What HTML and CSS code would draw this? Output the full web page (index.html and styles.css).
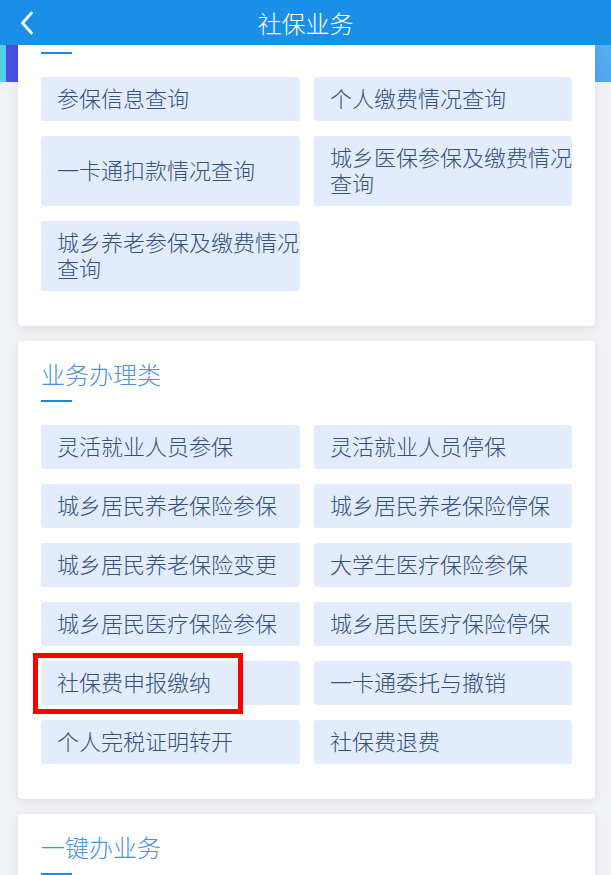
FILE: index.html
```html
<!DOCTYPE html>
<html lang="zh-CN">
<head>
  <meta charset="UTF-8">
  <title>社保业务</title>
  <link rel="stylesheet" href="styles.css">
</head>
<body>

<header class="sb-header">
  <a class="sb-back" href="#">
    <svg width="14" height="24" viewBox="0 0 14 24">
      <path d="M11.5 2 L2.5 12 L11.5 22" fill="none" stroke="#fff" stroke-width="2.8" stroke-linecap="round" stroke-linejoin="round"/>
    </svg>
  </a>
  <h1>社保业务</h1>
</header>

<main class="sb-page">

  <section class="sb-card">
    <h2>信息查询类</h2>
    <div class="sb-line"></div>
    <div class="sb-grid">
      <a class="sb-btn" href="#">参保信息查询</a>
      <a class="sb-btn" href="#">个人缴费情况查询</a>
      <a class="sb-btn" href="#">一卡通扣款情况查询</a>
      <a class="sb-btn" href="#">城乡医保参保及缴费情况查询</a>
      <a class="sb-btn" href="#">城乡养老参保及缴费情况查询</a>
    </div>
  </section>

  <section class="sb-card">
    <h2>业务办理类</h2>
    <div class="sb-line"></div>
    <div class="sb-grid">
      <a class="sb-btn" href="#">灵活就业人员参保</a>
      <a class="sb-btn" href="#">灵活就业人员停保</a>
      <a class="sb-btn" href="#">城乡居民养老保险参保</a>
      <a class="sb-btn" href="#">城乡居民养老保险停保</a>
      <a class="sb-btn" href="#">城乡居民养老保险变更</a>
      <a class="sb-btn" href="#">大学生医疗保险参保</a>
      <a class="sb-btn" href="#">城乡居民医疗保险参保</a>
      <a class="sb-btn" href="#">城乡居民医疗保险停保</a>
      <a class="sb-btn sb-mark" href="#">社保费申报缴纳</a>
      <a class="sb-btn" href="#">一卡通委托与撤销</a>
      <a class="sb-btn" href="#">个人完税证明转开</a>
      <a class="sb-btn" href="#">社保费退费</a>
    </div>
  </section>

  <section class="sb-card">
    <h2>一键办业务</h2>
    <div class="sb-line"></div>
  </section>

</main>

</body>
</html>
```

FILE: styles.css
```css
html, body {
  height: 100%;
  overflow: hidden;
}

body {
  margin: 0;
  background-color: #eff1f5;
  font-family: "Noto Sans CJK SC", "Noto Sans", sans-serif;
  color: #3a5683;
}

.sb-header {
  position: relative;
  z-index: 2;
  height: 45px;
  background-color: #1a8fe8;
  display: flex;
  align-items: center;
  justify-content: center;
}

.sb-header h1 {
  margin: 0;
  font-size: 24px;
  font-weight: 300;
  color: #ffffff;
  line-height: 43px;
}

.sb-back {
  position: absolute;
  left: 20px;
  top: 11px;
  display: flex;
}

/* banner carousel peeking out on both sides, scrolled under the header */
.sb-page {
  margin-top: -52px;
  padding: 0 16px 0 18px;
  display: flex;
  flex-direction: column;
  gap: 15px;
  background:
    linear-gradient(90deg, #52d3ea 0 6px, #4a4fe2 6px 18px, transparent 18px) left top / 100% 89px no-repeat,
    linear-gradient(180deg, #62b6f3, #4fa7ee) right top / 16px 89px no-repeat;
}

.sb-card {
  background-color: #ffffff;
  border-radius: 4px;
  box-shadow: 0 2px 10px rgba(20, 30, 60, 0.08);
  padding: 16px 23px 35px;
}

.sb-card h2 {
  margin: 0;
  font-size: 24px;
  font-weight: 300;
  line-height: 34px;
  color: #4a90e2;
}

.sb-line {
  width: 31px;
  height: 2px;
  margin-top: 9px;
  background-color: #1f87e5;
}

.sb-grid {
  margin-top: 23px;
  display: grid;
  grid-template-columns: 259px 258px;
  column-gap: 14px;
  row-gap: 15px;
}

.sb-btn {
  display: flex;
  align-items: center;
  padding: 7px 0 11px 16px;
  background-color: #e2ecfd;
  border-radius: 3px;
  font-size: 22px;
  font-weight: 300;
  line-height: 26px;
  color: #34507e;
  text-decoration: none;
}

.sb-mark {
  position: relative;
}

.sb-mark::after {
  content: "";
  position: absolute;
  left: -8px;
  top: -8px;
  width: 210px;
  height: 61px;
  box-sizing: border-box;
  border: 5px solid #ff0000;
}
```
